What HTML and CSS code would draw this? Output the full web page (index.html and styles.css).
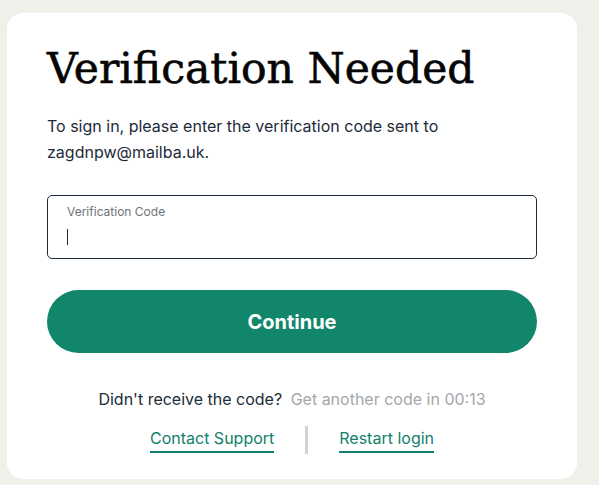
FILE: index.html
```html
<!DOCTYPE html>
<html lang="en">
<head>
<meta charset="utf-8">
<title>Verification Needed</title>
<link rel="stylesheet" href="styles.css">
</head>
<body>
<main class="card">
  <h1 class="title">Verification Needed</h1>
  <p class="intro">To sign in, please enter the verification code sent to zagdnpw@mailba.uk.</p>
  <label class="field">
    <span class="field-label">Verification Code</span>
    <span class="caret"></span>
  </label>
  <button class="primary" type="button">Continue</button>
  <p class="resend"><span class="resend-q">Didn't receive the code?</span> <span class="resend-timer">Get another code in 00:13</span></p>
  <nav class="links">
    <a class="link" href="#">Contact Support</a>
    <span class="divider"></span>
    <a class="link" href="#">Restart login</a>
  </nav>
</main>
</body>
</html>
```
FILE: styles.css
```css
html, body {
  margin: 0;
  padding: 0;
}
body {
  background: #f0efea;
  font-family: Inter, "Noto Sans", sans-serif;
  color: #1c2b39;
  padding: 13px 22px 6px 7px;
}
.card {
  background: #ffffff;
  border-radius: 16px;
  padding: 28px 40px 26px 40px;
  box-sizing: border-box;
  height: 466px;
}
.title {
  margin: 0;
  font-family: "DejaVu Serif", serif;
  font-weight: 400;
  font-size: 42.5px;
  line-height: 56px;
  color: #050505;
  -webkit-text-stroke: 0.6px #050505;
}
.intro {
  margin: 16px 0 0 0;
  font-size: 16px;
  line-height: 26px;
  width: 440px;
}
.field {
  display: flex;
  flex-direction: column;
  margin-top: 30px;
  height: 64px;
  box-sizing: border-box;
  border: 1px solid #1c2b39;
  border-radius: 5px;
  padding: 9px 19px;
}
.field-label {
  font-size: 12px;
  line-height: 14px;
  color: #6e7479;
}
.caret {
  display: block;
  width: 1px;
  height: 16px;
  margin-top: 10px;
  background: #1c2b39;
}
.primary {
  display: block;
  width: 100%;
  margin-top: 31px;
  height: 63px;
  border: 0;
  border-radius: 32px;
  background: #12866b;
  color: #ffffff;
  font-family: Inter, sans-serif;
  font-weight: 700;
  font-size: 20px;
}
.resend {
  margin: 35px 0 0 0;
  text-align: center;
  font-size: 16px;
  line-height: 22px;
}
.resend-q {
  margin-right: 4px;
}
.resend-timer {
  color: #a3a7ab;
}
.links {
  display: flex;
  justify-content: center;
  align-items: center;
  gap: 31px;
  margin-top: 16px;
}
.link {
  color: #12806a;
  font-size: 16px;
  text-decoration: none;
  border-bottom: 2px solid #12806a;
  padding-bottom: 3px;
  line-height: 20px;
}
.divider {
  width: 3px;
  height: 28px;
  background: #d4d4d4;
}
```
